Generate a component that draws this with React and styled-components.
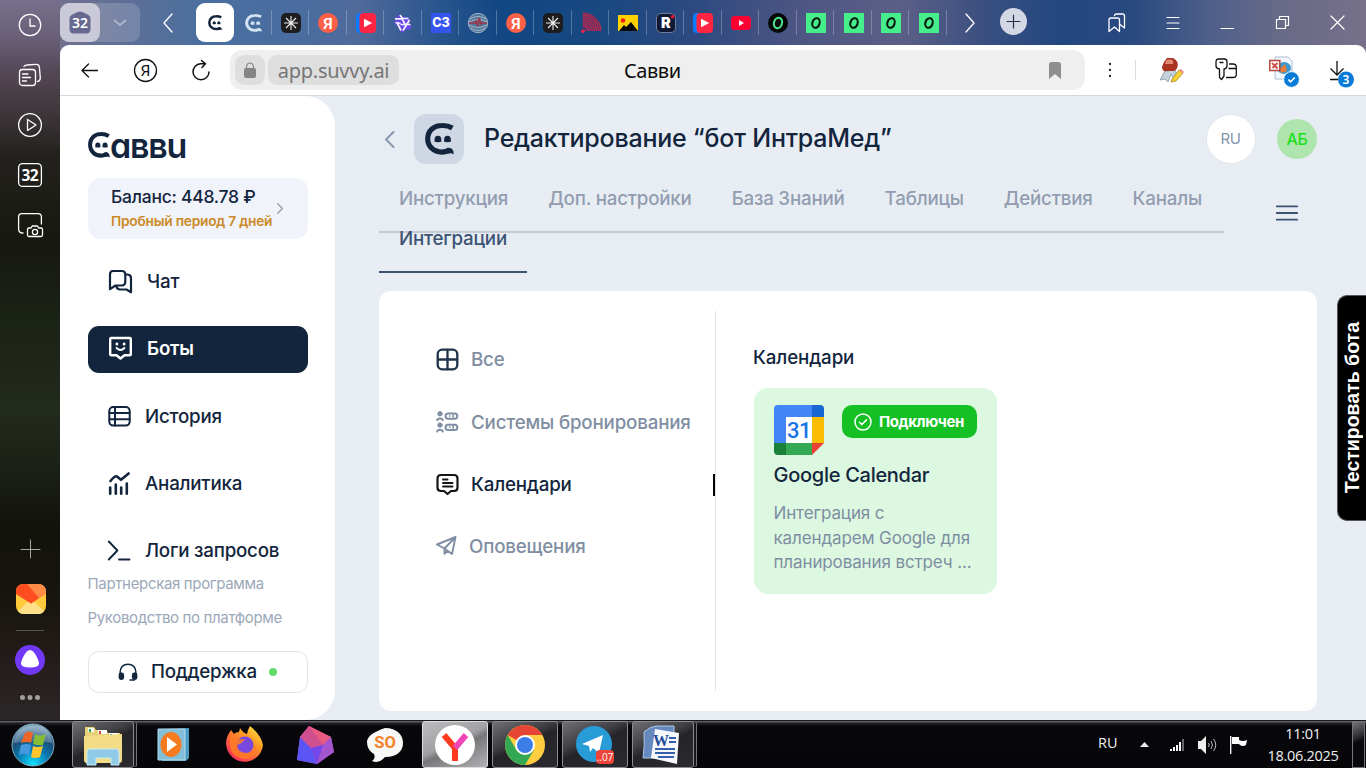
import React from "react";
import styled, { createGlobalStyle, css } from "styled-components";

const ink = "#12253d";
const muted = "#8997ab";

const GlobalStyle = createGlobalStyle`
  * { box-sizing: border-box; }
  body { margin: 0; overflow: hidden; font-family: Inter, "Liberation Sans", sans-serif; }
  svg { display: block; flex: none; overflow: visible; }
`;

/* ---------- shell ---------- */
const Desktop = styled.div`
  width: 1366px; height: 768px; display: flex; flex-direction: column; overflow: hidden; background: #08080b;
`;
const Browser = styled.div`
  height: 720px; display: flex; background: #6f6a80;
`;
const Rail = styled.aside`
  width: 60px; display: flex; flex-direction: column; align-items: center; padding-top: 10px;
  background: linear-gradient(180deg, #77708c 0, #6a6079 35px, #524653 75px, #40383c 110px, #23211d 155px, #171810 240px, #1a2115 310px, #232b1d 410px, #1a2015 470px, #12120c 530px, #17150e 600px, #241c1a 660px, #2b2628 720px);
`;
const RailButton = styled.div`
  width: 30px; height: 30px; margin-bottom: 20px; display: grid; place-items: center;
`;
const RailBottom = styled.div`
  margin-top: auto; display: flex; flex-direction: column; align-items: center; padding-bottom: 17px;
`;
const MailCell = styled.div`
  width: 31px; height: 30px; margin-top: 25px; padding-left: 1px;
`;
const RailLine = styled.div`
  width: 28px; height: 1px; background: #55524e; margin: 16px 0 14px;
`;
const Main = styled.div`
  width: 1306px; display: flex; flex-direction: column;
  background: linear-gradient(90deg, #71708f 0, #5c6f98 70px, #496f9f 150px, #4a6c9f 240px, #50699a 300px, #28558d 380px, #124783 440px, #184880 540px, #2f4a80 640px, #4d5683 740px, #5b5f86 840px, #3c5081 920px, #22477f 1000px, #29497f 1070px, #4e5f8a 1150px, #686a87 1220px, #77708a 1306px);
`;

/* ---------- tab strip ---------- */
const TabStrip = styled.div`
  height: 45px; display: flex; align-items: flex-start; padding-top: 3px;
  & > * { flex: none; }
`;
const TabGroup = styled.div`
  width: 80px; height: 39px; border-radius: 9px; background: rgba(255,255,255,.16); display: flex;
`;
const GroupCount = styled.div`
  width: 40px; height: 39px; border-radius: 9px; background: #c9c9d8; display: grid; place-items: center;
`;
const StripCell = styled.div`
  width: ${(p) => p.$w}px; height: 39px; display: grid; place-items: center;
`;
const ActiveTab = styled.div`
  width: 38px; height: 39px; border-radius: 9px; background: #fff; display: grid; place-items: center;
`;
const Tab = styled.div`
  width: 37.53px; height: 25px; margin-top: 7px; display: grid; place-items: center; padding-left: 2px;
  border-right: 1px solid rgba(255,255,255,.25);
`;
const NewTab = styled.div`
  width: 27px; height: 27px; border-radius: 50%; background: #d4d8e4; display: grid; place-items: center; margin: 5px 76px 0 7px;
`;

/* ---------- toolbar ---------- */
const Toolbar = styled.div`
  height: 51px; background: #fff; border-radius: 9px 9px 0 0; border-bottom: 1px solid #d3d7de;
  display: flex; align-items: center;
`;
const ToolCell = styled.div`
  width: ${(p) => p.$w}px; height: 50px; display: grid; place-items: center;
`;
const Address = styled.div`
  width: 855px; height: 40px; border-radius: 12px; background: #efefef; display: flex; align-items: center; padding: 0 24px 0 5px;
  font-family: "Noto Sans", "Open Sans", sans-serif; font-size: 20px;
`;
const LockBox = styled.div`
  width: 30px; height: 30px; border-radius: 9px; background: #dedede; display: grid; place-items: center; margin-right: 3px;
`;
const Host = styled.div`
  width: 131px; height: 30px; border-radius: 9px; background: #dedede; color: #767676; line-height: 31px; text-align: center; letter-spacing: -.25px;
`;
const PageTitle = styled.div`
  flex: 1; padding-left: 225px; color: #0c0c0c; letter-spacing: -.45px;
`;
const ToolDivider = styled.div`
  width: 1px; height: 20px; background: #dcdcdc;
`;

/* ---------- page ---------- */
const Page = styled.div`
  height: 624px; display: flex; background: #e8edf4; position: relative;
`;
const Sidebar = styled.aside`
  width: 275px; background: #fff; border-radius: 0 30px 30px 0; padding: 36px 27px 27px 28px; display: flex; flex-direction: column;
`;
const Logo = styled.div`
  height: 27px; display: flex; align-items: flex-start; color: ${ink}; margin-bottom: 19px;
`;
const LogoText = styled.span`
  font-size: 34px; line-height: 27px; font-weight: 600; letter-spacing: -1.2px; font-feature-settings: "cv11";
`;
const Balance = styled.div`
  height: 61px; border-radius: 13px; background: #f0f3fa; display: flex; align-items: center; padding-left: 23px; margin-bottom: 20px;
`;
const BalanceText = styled.div`
  width: 166px; white-space: nowrap;
`;
const Amount = styled.div`
  font-size: 17.5px; line-height: 25px; font-weight: 500; color: ${ink}; letter-spacing: -.26px;
`;
const Trial = styled.div`
  font-size: 13.75px; line-height: 24px; font-weight: 600; color: #cb8a26; letter-spacing: -.24px;
`;
const SideNav = styled.nav`
  display: flex; flex-direction: column; gap: 20.25px; height: 317px; margin-bottom: -8px;
`;
const SideItem = styled.div`
  height: 47px; flex: none; border-radius: 11px; display: flex; align-items: center; padding: 0 0 1.5px 20px;
  gap: 14px; font-size: 18.75px; letter-spacing: -.22px; font-weight: 500; color: ${ink}; white-space: nowrap;
  ${(p) => p.$active && css`background: #12253d; color: #fff; font-weight: 600;`}
`;
const SideLink = styled.div`
  font-size: 15px; line-height: 34px; color: #9ca8b9; white-space: nowrap; letter-spacing: -.34px; margin-left: -.5px;
`;
const Support = styled.div`
  height: 42px; border: 1px solid #dfe4ec; border-radius: 11px; display: flex; align-items: center; padding-left: 29px; margin-top: 16px;
  font-size: 18.75px; letter-spacing: -.25px; line-height: 38px; font-weight: 500; color: ${ink};
`;
const SupportLabel = styled.span`
  width: 105px; margin: 0 13px 0 13px; padding-bottom: 1px; white-space: nowrap;
`;
const Dot = styled.i`
  width: 8px; height: 8px; border-radius: 50%; background: #62dc6b;
`;

const Content = styled.main`
  width: 1031px; padding: 18px 49px 0 44px;
`;
const Header = styled.header`
  height: 50px; display: flex; align-items: center; padding-left: 5px;
`;
const Avatar = styled.div`
  width: 50px; height: 50px; border-radius: 12px; background: #cfd7e4; display: grid; place-items: center; margin: 0 20px 0 19px;
`;
const Title = styled.h1`
  margin: 0; padding-bottom: 1.5px; font-size: 25px; line-height: 48px; font-weight: 500; color: ${ink}; flex: 1; white-space: nowrap; letter-spacing: -.24px;
`;
const Lang = styled.div`
  width: 50px; height: 50px; border-radius: 50%; border: 1px solid #e2e7ec; background: #fff; color: #8495aa; font-size: 15px; letter-spacing: -.4px; line-height: 48px; text-align: center; margin-right: 21.5px;
`;
const User = styled.div`
  width: 40px; height: 40px; border-radius: 50%; background: #aee5ae; color: #1de01d; font-size: 16px; letter-spacing: -.3px; font-weight: 500; line-height: 40px; text-align: center;
`;
const NavRow = styled.div`
  display: flex; align-items: flex-start; margin-top: 14px; height: 113px;
`;
const Tabs = styled.nav`
  width: 845px; height: 55px; border-bottom: 2px solid #c5cbd8; display: flex; flex-wrap: wrap; align-content: flex-start;
`;
const PageTab = styled.div`
  height: ${(p) => (p.$active ? 55 : 40)}px; padding: 0 20px; line-height: 41px; font-size: 18.75px; letter-spacing: -.22px; font-weight: 500; white-space: nowrap;
  color: ${(p) => (p.$active ? "#3c5373" : "#929db0")};
  ${(p) => p.$active && css`border-bottom: 2px solid #3c5373;`}
`;
const Burger = styled.div`
  margin: 27px 0 0 52px;
`;
const Panel = styled.section`
  width: 938px; height: 420px; border-radius: 12px; background: #fff; display: flex; padding: 20px 0 0;
`;
const Filters = styled.div`
  width: 337px; height: 380px; border-right: 1px solid #e2e4e8; padding: 17.5px 0 0 57px; display: flex; flex-direction: column;
`;
const Filter = styled.div`
  height: ${(p) => p.$h || 62}px; display: flex; align-items: center; gap: 12px; color: #7f8ea2; font-size: 18.75px; letter-spacing: -.19px; font-weight: 500; white-space: nowrap;
  ${(p) => p.$active && css`color: ${ink};`}
`;
const Marker = styled.i`
  width: 2px; height: 22px; background: #000; margin-left: auto;
`;
const Results = styled.div`
  padding: 36px 0 0 38px;
`;
const SectionTitle = styled.h2`
  margin: 0 0 20px -1px; font-size: 18.75px; letter-spacing: -.12px; line-height: 21px; font-weight: 500; color: ${ink};
`;
const Card = styled.article`
  width: 243px; height: 206px; border-radius: 14px; background: #ddf8e0; padding: 17px 20px;
`;
const CardTop = styled.div`
  display: flex; justify-content: space-between; align-items: flex-start;
`;
const Connected = styled.div`
  width: 135px; height: 33px; border-radius: 10px; background: #14c024; color: #fff; display: flex; align-items: center; padding-left: 12px; gap: 7px;
  font-size: 15px; font-weight: 700; white-space: nowrap; letter-spacing: -.42px;
`;
const CardTitle = styled.h3`
  margin: 7px 0 13px -.5px; font-size: 20px; line-height: 26px; font-weight: 500; color: ${ink}; letter-spacing: -.28px;
`;
const CardText = styled.p`
  margin: 0 0 0 -.5px; font-size: 17px; line-height: 24.5px; color: #7d8da2; white-space: nowrap; letter-spacing: -.12px;
`;
const TestBot = styled.div`
  position: absolute; right: 0; top: 199px; width: 29px; height: 226px; border-radius: 10px 0 0 10px; background: #000; color: #fff;
  border: 1px solid #55555c; border-right: 0; writing-mode: vertical-rl; display: flex; align-items: center; justify-content: center;
  font: bold 19.5px "Liberation Sans", Arial, sans-serif; white-space: nowrap;
`;
const Turned = styled.span`
  transform: rotate(180deg); line-height: 26px;
`;

/* ---------- taskbar ---------- */
const Taskbar = styled.footer`
  height: 48px; border-top: 1px solid #17171b; display: flex; align-items: flex-start;
  background: linear-gradient(180deg, #79757d 0, #25242a 2px, #08080c 5px, #060609 46px);
`;
const StartCell = styled.div`
  width: 66px; height: 47px; display: grid; place-items: center; margin-right: 6px;
`;
const Task = styled.div`
  width: ${(p) => p.$w || 66}px; height: 47px; display: grid; place-items: center; margin-right: 4px;
  ${(p) => p.$open && css`
    border: 1px solid #8c8c90; border-radius: 3px;
    background: linear-gradient(155deg, #707074 0, #3e3d41 38%, #252428 50%, #2b2a2e 100%);
  `}
  ${(p) => p.$front && css`
    border: 1px solid #dedee0; background: linear-gradient(155deg, #bcbcbe 0, #a1a1a3 45%, #77777a 55%, #b2b2b4 100%);
  `}
  ${(p) => p.$stack && css`
    box-shadow: 3px 0 0 -1px #17171b, 4px 0 0 -1px #77777b; margin-right: 8px;
  `}
`;
const Tray = styled.div`
  margin-left: auto; display: flex; align-items: center; height: 47px; color: #f0f0f0; font-family: "Open Sans", "Noto Sans", sans-serif; font-size: 14.5px;
`;
const TrayLang = styled.div`
  width: 42px; padding-bottom: 4px;
`;
const TrayGap = styled.div`
  width: 21px;
`;
const TrayIcons = styled.div`
  display: flex; align-items: center; width: 96px; gap: 14px;
`;
const Clock = styled.div`
  width: 74px; text-align: center; line-height: 22px; padding-top: 1px; letter-spacing: -.3px; margin-right: 12px;
`;
const ShowDesktop = styled.div`
  width: 13px; height: 47px; border: 1px solid #74747a; background: linear-gradient(155deg, #77777b, #2a2a2e 35%, #09090c 45%); margin-right: 1px;
`;

/* ---------- drawings ---------- */
const Svg = ({ w, h = w, box, children, ...rest }) => (
  <svg width={w} height={h} viewBox={box || `0 0 ${w} ${h}`} fill="none" {...rest}>{children}</svg>
);
const Line = ({ children, color = "#fff", sw = 1.3, ...rest }) => (
  <Svg stroke={color} strokeWidth={sw} strokeLinecap="round" strokeLinejoin="round" {...rest}>{children}</Svg>
);

const Mark = ({ w = 29, h = 32, color = ink }) => (
  <Svg w={w} h={h} box="0 0 28 31" preserveAspectRatio="none">
    <path d="M26.4 4.8C23.4 3 20.5 2.3 16.3 2.4C8.5 2.4 2.6 7.8 2.6 15.2C2.6 22.5 8.3 28.2 16.2 28.2C19.6 28.2 21.5 26.8 24.4 26.6" stroke={color} strokeWidth="5" />
    <path d="M21 24.2C25 23.6 28 25.4 27.6 30.4C25.2 28.6 22 29.4 19 29.9Z" fill={color} />
    <path d="M9.2 18.2V16.4A3.3 4 0 0 1 15.8 16.4V18.2Q12.5 19 9.2 18.2ZM18.4 18.2V16.4A3.3 4 0 0 1 25 16.4V18.2Q21.7 19 18.4 18.2Z" fill={color} />
  </Svg>
);

const YaIcon = () => (
  <Svg w={20}><circle cx="10" cy="10" r="10" fill="#fc6047" />
    <text x="10" y="15.6" textAnchor="middle" fontSize="15.5" fontWeight="600" fontFamily="Roboto, sans-serif" fill="#fff">Я</text></Svg>
);
const Spark = () => (
  <Svg w={20}><rect width="20" height="20" rx="5" fill="#1d1d1f" />
    <path d="M10 3V17M3 10H17M5 5L15 15M15 5L5 15" stroke="#eee" strokeWidth="1.1" /></Svg>
);
const PlayTile = () => (
  <Svg w={20}><rect width="12" height="20" rx="4" fill="#0b7cff" /><rect x="3.5" width="16.5" height="20" rx="4" fill="#ff2441" /><path d="M8 5.8L16.2 10L8 14.2Z" fill="#fff" /></Svg>
);
const Knot = () => (
  <Svg w={20}>
    <path d="M6 1L9 4H15L17 7L15.5 10L19 14L16 17L13 16L10 20L7 18L5.5 13L1 11L3 7L1 5L5 4Z" fill="#6a4bea" />
    <path d="M7 2L9.5 5.5H15.5M2 5.8H9L12.5 12M4 9.5L8 17.5M16.5 7L10 17.5M7.5 11.5H17.5M2.5 9.5L7.5 10.5" stroke="#f5f0ff" strokeWidth="1.7" />
  </Svg>
);
const Se = () => (
  <Svg w={20}><rect width="20" height="20" fill="#3355ee" /><text x="10" y="14.3" textAnchor="middle" fontSize="12.5" fontWeight="800" fontFamily="Inter, sans-serif" fill="#fff">СЗ</text></Svg>
);
const Globe = () => (
  <Svg w={20}><circle cx="10" cy="10" r="9.7" fill="#51779d" stroke="#a3b3c5" /><path d="M2 6Q10 1 18 6M1 9Q10 4 19 9M1 12Q10 17 19 12M3 15Q10 20 17 15" stroke="#a4b6c8" /><path d="M1 10H7L8 8L10 13L11 5L13 11L14 10H19" stroke="#9e3548" strokeWidth="1.7" /></Svg>
);
const Fan = () => (
  <Svg w={20}><path d="M1.5 0A18.5 18.5 0 0 1 20 18H4Q4 15.5 1.5 15.5Z" fill="#a81f4c" opacity=".55" /><g stroke="#d32a48" strokeWidth=".9">{[5, 7.2, 9.4, 11.6, 13.8, 16, 18].map((r) => <path key={r} d={`M2 ${18 - r}A${r} ${r} 0 0 1 ${2 + r} 18`} />)}</g><circle cx="2" cy="18.2" r="1.8" fill="#ff2441" /></Svg>
);
const Photo = () => (
  <Svg w={20} h={16}><rect width="20" height="16" fill="#ffd100" /><path d="M1 16L6 10L8 12L13 7L20 16Z" fill="#090909" /><circle cx="5" cy="5.5" r="2.2" fill="#f01a1a" /></Svg>
);
const RuTile = () => (
  <Svg w={20}><rect x=".5" y=".5" width="19" height="19" rx="4.5" fill="#101a36" stroke="#6f7c9a" /><text x="9.8" y="15.2" textAnchor="middle" fontSize="14.5" fontWeight="900" fontFamily="Inter, sans-serif" fill="#fff">R</text><circle cx="16.6" cy="3.8" r="1.8" fill="#ed143b" /></Svg>
);
const Tube = () => (
  <Svg w={20} h={14}><rect width="20" height="14" rx="4" fill="#ff0033" /><path d="M8 4L13 7L8 10Z" fill="#fff" /></Svg>
);
const Ring = ({ round }) => (
  <Svg w={20}>
    {round ? <circle cx="10" cy="10" r="10" fill="#050807" /> : <rect width="20" height="20" fill="#45ee8b" />}
    <ellipse cx="10" cy="10" rx={round ? 4 : 3.6} ry={round ? 5.3 : 4.9} stroke={round ? "#4ee68c" : "#08180e"} strokeWidth="2.1" transform="rotate(18 10 10)" />
  </Svg>
);
const favicons = [Spark, YaIcon, PlayTile, Knot, Se, Globe, YaIcon, Spark, Fan, Photo, RuTile, PlayTile, Tube, () => <Ring round />, Ring, Ring, Ring, Ring];

const ChatIcon = () => (
  <Line w={25} color={ink} sw={2.2}>
    <path d="M5 2H14Q17.3 2 17.3 5.5V12.5Q17.3 16.5 13.5 16.5H7.5L2 20.2V5.5Q2 2 5 2ZM17.5 5.5H19.5Q23 5.8 23 9V23.3L18.5 20.5H12Q9 20.5 8.3 17" />
  </Line>
);
const BotIcon = () => (
  <Line w={25} color="#fff" sw={2.4}>
    <path d="M3.2 2H21.8Q22.8 2 22.8 3V18.2Q22.8 19.2 21.8 19.2H16.5L12.5 22.5L8.5 19.2H3.2Q2.2 19.2 2.2 18.2V3Q2.2 2 3.2 2Z" />
    <path d="M8.6 12Q12.5 16 16.4 12" strokeWidth="2" /><path d="M8.9 8V8.2M16.1 8V8.2" strokeWidth="2.8" />
  </Line>
);
const HistoryIcon = () => (
  <Line w={23} color={ink} sw={2}><rect x="1.3" y="2" width="20.4" height="18.6" rx="4" /><path d="M7 2V20.5M1.5 8H21.5M1.5 14.2H21.5" /></Line>
);
const StatsIcon = () => (
  <Line w={23} h={25} color={ink} sw={2.6}><path d="M2.5 10Q7 4.5 9 5.5L13 8.8L20.6 2.5M2.2 16.5V22.8M7.8 13.5V22.8M13.2 16.5V22.8M18.8 12.5V22.8" /></Line>
);
const LogIcon = () => (
  <Line w={23} color={ink} sw={1.9}><path d="M.8 2.5L9.4 11.5L.8 20.5M11 20.5H21.5" /></Line>
);
const HeadphonesIcon = () => (
  <Svg w={20} h={18}><path d="M2.2 13V8.5Q3 1.2 10 1.2T17.8 8.5V13" stroke={ink} strokeWidth="1.5" /><rect x=".6" y="9.5" width="5.5" height="7.5" rx="2.4" fill={ink} /><rect x="13.9" y="9.5" width="5.5" height="7.5" rx="2.4" fill={ink} /><path d="M11.5 17H17" stroke={ink} strokeWidth="1.5" /></Svg>
);
const GridIcon = () => (
  <Line w={23} color="#203349" sw={2.3}><rect x="1.7" y="1.7" width="19.6" height="19.6" rx="4.5" /><path d="M11.5 2V21M2 11.5H21" /></Line>
);
const BookingIcon = () => (
  <Line w={23} color="#7f8ea2" sw={2}>
    {[0, 11.3].map((y) => <g key={y} transform={`translate(0 ${y})`}><circle cx="4" cy="2.8" r="2.2" fill="#7f8ea2" strokeWidth="1" /><path d="M1.2 9.2Q1.5 7.4 4 7.4T6.8 9.2" /><rect x="9.5" y="2.5" width="11.8" height="5.2" rx="2.6" /><path d="M13.5 5H14M17.2 4V6" strokeWidth="1.6" /></g>)}
  </Line>
);
const NoteIcon = () => (
  <Line w={23} color="#151515" sw={2.2}><path d="M5 2H18Q21.5 2 21.5 5.5V14.5Q21.5 18 18 18H15L11.5 21L8 18H5Q1.5 18 1.5 14.5V5.5Q1.5 2 5 2Z" /><path d="M7 6.5H11.5M7 10H16.5M7 13.5H16.5" strokeWidth="2" /></Line>
);
const PlaneIcon = () => (
  <Line w={21} h={22} color="#7f8ea2" sw={1.9}><path d="M1 9.5L19.5 2L16 19L8.5 13.5L19.5 2M1 9.5L8.5 13.5V18.7L11.7 15.8" /></Line>
);
const GCal = () => (
  <Svg w={50}>
    <path d="M4 0H38V12H12V38H0V4Q0 0 4 0Z" fill="#4285f4" /><path d="M38 0H46Q50 0 50 4V12H38Z" fill="#1967d2" /><path d="M38 12H50V38H38Z" fill="#fbbc04" />
    <path d="M12 38H38V50H12Z" fill="#34a853" /><path d="M0 38H12V50H4Q0 50 0 46Z" fill="#188038" /><path d="M38 38H50L38 50Z" fill="#ea4335" /><path d="M12 12H38V38H12Z" fill="#fff" />
    <text x="25" y="33" textAnchor="middle" fontFamily="Roboto, sans-serif" fontSize="22" fontWeight="500" letterSpacing="-.6" fill="#1a73e8">31</text>
  </Svg>
);

const tabs = ["Инструкция", "Доп. настройки", "База Знаний", "Таблицы", "Действия", "Каналы"];
const sideItems = [
  { label: "Чат", Icon: ChatIcon },
  { label: "Боты", Icon: BotIcon, active: true },
  { label: "История", Icon: HistoryIcon },
  { label: "Аналитика", Icon: StatsIcon },
  { label: "Логи запросов", Icon: LogIcon },
];

function LeftRail() {
  return (
    <Rail>
      <RailButton><Line w={24}><circle cx="12" cy="12" r="10.7" /><path d="M12 6V13H17" /></Line></RailButton>
      <RailButton><Line w={24}><rect x="1.5" y="6.5" width="16" height="16" rx="3" /><path d="M6 3.5Q7 2 9 2L18 1.3Q21 1.2 21.4 4L22.3 15Q22.3 18 19.5 18.5M4.5 11H10M4.5 14.5H12.5M4.5 18H8.5" /></Line></RailButton>
      <RailButton><Line w={24}><circle cx="12" cy="12" r="11.4" /><path d="M9.5 6.5L18 12L9.5 17.5Z" /></Line></RailButton>
      <RailButton><Line w={24}><rect x=".6" y=".6" width="22.8" height="22.8" rx="4" /><text x="12" y="17.8" textAnchor="middle" fontSize="15.5" fontWeight="700" fontFamily="Noto Sans, sans-serif" fill="#fff" stroke="none" textLength="17">32</text></Line></RailButton>
      <RailButton><Line w={24}><path d="M5 20H4Q.6 19.5.6 16V4Q.6.6 4 .6H20Q23.4.6 23.4 4V11M9.5 16.5Q9.5 15 11 15H13L14.2 13H19.5L20.6 15H23Q24.5 15 24.5 16.5V22Q24.5 23.5 23 23.5H11Q9.5 23.5 9.5 22Z" /><circle cx="17" cy="19" r="2.6" /></Line></RailButton>
      <RailBottom>
        <Line w={20} color="#a5a49d" sw={1}><path d="M10.5 1V19M1 10.5H20" /></Line>
        <MailCell>
          <Svg w={30}>
            <rect width="30" height="30" rx="8" fill="#ffcb3d" /><path d="M2 27L15 15L28 27Q26 30 22 30H8Q4 30 2 27Z" fill="#ffe089" />
            <path d="M0 10V8Q0 0 8 0H22Q30 0 30 8V10L15 19.5Z" fill="#ff8b45" /><path d="M0 10V8Q0 0 8 0H11L23 14L15 19.5Z" fill="#ff4d20" />
          </Svg>
        </MailCell>
        <RailLine />
        <Svg w={30}><circle cx="15" cy="15" r="15" fill="#7139f6" /><path d="M15 5C19 5 24 15 24 18.5Q24 22.5 15 22.5T6 18.5C6 15 11 5 15 5Z" fill="#fff" /></Svg>
        <Svg w={20} h={28}><path d="M2.5 22.5h.01M10 22.5h.01M17.5 22.5h.01" stroke="#a39f9e" strokeWidth="5" strokeLinecap="round" /></Svg>
      </RailBottom>
    </Rail>
  );
}

function Strip() {
  return (
    <TabStrip>
      <TabGroup>
        <GroupCount>
          <Svg w={22} h={24}><path d="M8.5 1Q11 0 13.5 1L19.5 4Q21.5 5 21.5 8V18Q21.5 22.5 17 22.5H5Q.5 22.5.5 18V8Q.5 5 2.5 4Z" fill="#66688f" /><text x="11" y="16.5" textAnchor="middle" fontSize="14" fontWeight="600" fontFamily="Noto Sans, sans-serif" fill="#fff" textLength="16">32</text></Svg>
        </GroupCount>
        <StripCell $w={40}><Line w={14} h={8} sw={1.8} color="#b0b6cb"><path d="M1.5 1.5L7 6L12.5 1.5" /></Line></StripCell>
      </TabGroup>
      <StripCell $w={56}><Line w={10} h={18}><path d="M9 0L1 9L9 18" /></Line></StripCell>
      <ActiveTab><Mark w={14} h={15.5} /></ActiveTab>
      <Tab><Mark w={17} h={18} color="#d5e4f2" /></Tab>
      {favicons.map((Icon, i) => <Tab key={i}><Icon /></Tab>)}
      <StripCell $w={46}><Line w={10} h={18}><path d="M1 0L9 9L1 18" /></Line></StripCell>
      <NewTab><Line w={13} sw={1.2} color="#273049"><path d="M6.5 0V13M0 6.5H13" /></Line></NewTab>
      <StripCell $w={29}><Line w={18} h={20}><path d="M1 7Q1 5 3 5H9.5Q11.5 5 11.5 7V18.5L6.5 14L1 18.5ZM6.5 2.5Q6.8 1 8.5 1H14.5Q16.5 1 16.5 3V15L12 11.5" /></Line></StripCell>
      <StripCell $w={82}><Line w={12} h={12} sw={1.2}><path d="M0 .5H12M0 6H12M0 11.5H12" /></Line></StripCell>
      <StripCell $w={28}><Line w={13} h={16} sw={1.2}><path d="M0 13.5H12.5" /></Line></StripCell>
      <StripCell $w={82}><Line w={13} sw={1.2}><path d="M.5 3.5H9.5V12.5H.5ZM3.5 3.5V.5H12.5V9.5H9.5" /></Line></StripCell>
      <StripCell $w={28}><Line w={13} sw={1.2}><path d="M0 0L13 13M13 0L0 13" /></Line></StripCell>
    </TabStrip>
  );
}

function Tools() {
  return (
    <Toolbar>
      <ToolCell $w={58}><Line w={17} h={15} color="#111"><path d="M16.5 7.5H1M7.5 1L1 7.5L7.5 14" /></Line></ToolCell>
      <ToolCell $w={55}><Line w={23} color="#111" sw={1.3}><circle cx="11.5" cy="11.5" r="11" /><text x="11.5" y="17" textAnchor="middle" fontSize="15.5" fontFamily="Roboto, sans-serif" fill="#111" stroke="none">Я</text></Line></ToolCell>
      <ToolCell $w={55}><Line w={18} h={21} color="#111" sw={1.5}><path d="M13.5 3.8H8.5A8 8 0 1 0 17 12M9.5.5L13.5 3.8L10 7.5" /></Line></ToolCell>
      <ToolCell $w={2} />
      <Address>
        <LockBox><Svg w={12} h={16}><rect y="6" width="12" height="10" rx="2" fill="#858585" /><path d="M2.5 7V4.5Q3 1 6 1T9.5 4.5V7" stroke="#858585" strokeWidth="1.2" /></Svg></LockBox>
        <Host>app.suvvy.ai</Host>
        <PageTitle>Савви</PageTitle>
        <Svg w={12} h={17}><path d="M2.5 0H9.5Q12 0 12 2.5V17L6 12L0 17V2.5Q0 0 2.5 0Z" fill="#8f8f8f" /></Svg>
      </Address>
      <ToolCell $w={50}><Svg w={4} h={16}><path d="M2 2h.01M2 8h.01M2 14h.01" stroke="#222" strokeWidth="2.3" strokeLinecap="round" /></Svg></ToolCell>
      <ToolDivider />
      <ToolCell $w={70}><Svg w={24} h={26}><path d="M6 14L1 23L6 22L9 25L12 17L16 24L19 20L16 13Z" fill="#c4d2de" stroke="#778b9b" strokeWidth=".7" /><path d="M8 1H14Q20 4 18.5 10Q17 14 14 14H8Q3 15 3 10Q4 5 8 1Z" fill="#a93321" /><path d="M8 2.5H13Q15 5 14 7H6Q6 5 8 2.5Z" fill="#e08a74" /><path d="M13 22L20 13L24 16L17 24L12 25Z" fill="#f4d32f" stroke="#9d7620" strokeWidth=".7" /><path d="M20 13L22 12L25 15L23.5 17Z" fill="#ee8f83" /></Svg></ToolCell>
      <ToolCell $w={40}><Line w={22} color="#111" sw={1.3}><path d="M3.5 0H9.5Q12 0 12 3V7Q12 9.5 9 10V17L6.5 20.5L4.5 18.5V10Q1 9.5 1 7V3Q1 0 3.5 0ZM5 3.5H8M14.5 5H18Q21.3 5 21.3 8V15.5Q21.3 18.5 18 18.5H11.5M14 9.5H21" /></Line></ToolCell>
      <ToolCell $w={72}><Svg w={26} h={26}><path d="M6 0H19L23 4V22H6Z" fill="#f3f7fc" stroke="#a8bed7" /><ellipse cx="15" cy="11" rx="7" ry="6" fill="#3998cd" /><path d="M11 12L16 7L18 14L12 16Z" fill="#ee7d34" /><rect x=".8" y="3.5" width="10" height="10" fill="#fff" stroke="#b9443c" strokeWidth="1.5" /><path d="M3 6L8.5 11.5M8.5 6L3.5 11" stroke="#cf554b" strokeWidth="2" /><circle cx="22.5" cy="22.5" r="7.9" fill="#087bd9" stroke="#fff" /><path d="M19.3 22.5L21.6 24.8L25.8 20.5" stroke="#fff" strokeWidth="1.7" /></Svg></ToolCell>
      <ToolCell $w={42}><Svg w={23} h={26}><path d="M9 4V18M2.5 11.5L9 18L15.5 11.5M2 22.5H10" stroke="#111" strokeWidth="1.3" /><circle cx="18" cy="22.5" r="8" fill="#087bd9" /><text x="18" y="26.9" textAnchor="middle" fontSize="12" fontWeight="600" fontFamily="Noto Sans, sans-serif" fill="#fff">3</text></Svg></ToolCell>
    </Toolbar>
  );
}

function SavviPage() {
  return (
    <Page>
      <Sidebar>
        <Logo><Mark w={22} h={26} /><LogoText>аввu</LogoText></Logo>
        <Balance>
          <BalanceText><Amount>Баланс: 448.78 ₽</Amount><Trial>Пробный период 7 дней</Trial></BalanceText>
          <Line w={6} h={11} color="#98a4b5" sw={1.5}><path d="M.8.8L5.3 5.5L.8 10.2" /></Line>
        </Balance>
        <SideNav>
          {sideItems.map(({ label, Icon, active }) => <SideItem key={label} $active={active}><Icon />{label}</SideItem>)}
        </SideNav>
        <SideLink>Партнерская программа</SideLink>
        <SideLink>Руководство по платформе</SideLink>
        <Support><HeadphonesIcon /><SupportLabel>Поддержка</SupportLabel><Dot /></Support>
      </Sidebar>
      <Content>
        <Header>
          <Line w={11} h={17} color={muted} sw={2}><path d="M9.5 1L2 8.5L9.5 16" /></Line>
          <Avatar><Mark /></Avatar>
          <Title>Редактирование “бот ИнтраМед”</Title>
          <Lang>RU</Lang>
          <User>АБ</User>
        </Header>
        <NavRow>
          <Tabs>
            {tabs.map((t) => <PageTab key={t}>{t}</PageTab>)}
            <PageTab $active>Интеграции</PageTab>
          </Tabs>
          <Burger><Line w={22} h={16} color="#3c5373" sw={1.8}><path d="M.8 1.3H21.2M.8 8H21.2M.8 14.7H21.2" /></Line></Burger>
        </NavRow>
        <Panel>
          <Filters>
            <Filter><GridIcon />Все</Filter>
            <Filter $h={63}><BookingIcon />Системы бронирования</Filter>
            <Filter $active><NoteIcon />Календари<Marker /></Filter>
            <Filter $h={61}><PlaneIcon />Оповещения</Filter>
          </Filters>
          <Results>
            <SectionTitle>Календари</SectionTitle>
            <Card>
              <CardTop>
                <GCal />
                <Connected><Line w={18} sw={1.5}><circle cx="9" cy="9" r="8" /><path d="M5.5 9.2L8 11.6L12.5 6.8" /></Line>Подключен</Connected>
              </CardTop>
              <CardTitle>Google Calendar</CardTitle>
              <CardText>Интеграция с<br />календарем Google для<br />планирования встреч ...</CardText>
            </Card>
          </Results>
        </Panel>
      </Content>
      <TestBot><Turned>Тестировать бота</Turned></TestBot>
    </Page>
  );
}

function Bar() {
  return (
    <Taskbar>
      <StartCell>
        <Svg w={44}><defs><radialGradient id="orb" cx=".5" cy=".95" r=".9"><stop stopColor="#14dfff" /><stop offset=".4" stopColor="#087db5" /><stop offset=".7" stopColor="#1b4e78" /><stop offset="1" stopColor="#7fa5be" /></radialGradient></defs>
          <circle cx="22" cy="22" r="21" fill="url(#orb)" stroke="#81a9bd" /><path d="M3 20Q5 4 22 3T41 20Q22 16 3 20Z" fill="#fff" opacity=".22" />
          <path d="M14 10Q18 7 22 10L20 20Q16 18 10 20Z" fill="#ee6527" /><path d="M24 11Q29 14 35 11L32 22Q27 23 22 21Z" fill="#86bd37" /><path d="M10 22Q16 20 20 22L18 33Q14 29 8 32Z" fill="#4499df" /><path d="M22 23Q26 25 32 23L29 34Q24 36 20 34Z" fill="#ffc52c" />
        </Svg>
      </StartCell>
      <Task $w={62} $open $stack><Svg w={42}><path d="M3 3H12L14 6H24L26 9H38V38H3Z" fill="#e6d078" /><path d="M6 4h6v4H6zM16 6h9v4h-9zM27 9h9v4h-9z" fill="#fff" /><path d="M7 5h2v3H7z" fill="#28a34a" /><path d="M17 7h2v3h-2z" fill="#d4432f" /><path d="M28 10h2v3h-2z" fill="#328dd6" /><path d="M2 12L40 10V36Q40 39 37 39H5Q2 39 2 36Z" fill="#f2dc86" /><path d="M8 25H34Q37 25 37 28V41H29V34H14V41H5V28Q5 25 8 25Z" fill="#8fcbe6" stroke="#c9ecf7" /></Svg></Task>
      <Task><Svg w={37} h={36}><path d="M5 2L32 1V31L29 34H5Z" fill="#4c9cc1" /><path d="M1 2H28V33H1Z" fill="#83bfd9" stroke="#b0dcea" /><ellipse cx="14" cy="17.5" rx="10.5" ry="12.5" fill="#f47b20" /><path d="M10 10L20 17.5L10 25Z" fill="#fff" /></Svg></Task>
      <Task><Svg w={40}><defs><linearGradient id="fx" x1="1" y1="0" x2=".2" y2="1"><stop stopColor="#fff44d" /><stop offset=".4" stopColor="#ff9a22" /><stop offset="1" stopColor="#ff2460" /></linearGradient></defs><path d="M3 10L6 5L9 9Q11 7 14 7L15 3Q18 8 22 9Q23 4 25 1Q36 10 38 20A18.5 18.5 0 1 1 3 10Z" fill="url(#fx)" /><circle cx="20" cy="20" r="8.5" fill="#7949df" /><path d="M5 9Q9 16 20 14Q17 19 12 20Q13 28 22 28Q29 27 30 20Q33 33 20 34Q6 33 5 20Z" fill="#ff7d24" opacity=".85" /></Svg></Task>
      <Task><Svg w={40}><path d="M14 1L36 12L39 27L22 39L2 35L5 12Z" fill="#b74cb3" /><path d="M14 1L36 12L28 20L5 12Z" fill="#e85a80" /><path d="M36 12L39 27L22 39L28 20Z" fill="#a355cf" /><path d="M5 12L16 23L22 39L2 35Z" fill="#5a55f4" /><path d="M5 12L14 1L28 20L16 23Z" fill="#d0508f" /><path d="M16 23L28 20L22 39Z" fill="#7547e8" /></Svg></Task>
      <Task><Svg w={38} h={36}><path d="M19 1C31 1 37 8 37 16S31 30 19 30Q13 37 6 34Q10 31 8 27Q1 23 1 15T19 1Z" fill="#f8f8f6" /><text x="19" y="20.5" textAnchor="middle" fontFamily="Roboto, sans-serif" fontWeight="700" fontSize="16.5" fill="#f48127">SO</text></Svg></Task>
      <Task $open $front><Svg w={40}><circle cx="20" cy="20" r="20" fill="#fff" /><path d="M9 10L20 23V36" stroke="#ff3b1f" strokeWidth="6" strokeLinejoin="round" /><path d="M20 23L31 10" stroke="#ef45b5" strokeWidth="6" /></Svg></Task>
      <Task $open><Svg w={40}><circle cx="20" cy="20" r="20" fill="#ffcd40" /><path d="M20 20L2.7 10A20 20 0 0 1 37.3 10H20Z" fill="#e64535" /><path d="M2.7 10A20 20 0 0 0 20 40L29 25L20 20L11.5 25Z" fill="#35a853" /><circle cx="20" cy="20" r="10" fill="#fff" /><circle cx="20" cy="20" r="8" fill="#3b7de9" /></Svg></Task>
      <Task $open><Svg w={38}><circle cx="18" cy="18" r="18" fill="#289cd7" /><path d="M6 18L27 9L23 27L17 22L14 26L13 20Z" fill="#fff" /><rect x="20" y="24" width="18" height="14" rx="4" fill="#ef4339" /><text x="29" y="35" textAnchor="middle" fontFamily="Open Sans, sans-serif" fontSize="10" fill="#fff">..07</text></Svg></Task>
      <Task $w={62} $open $stack><Svg w={44} h={42}><path d="M3 8Q8 3 15 2H33V34H2Q4 20 3 8Z" fill="#6589bf" stroke="#adc7e6" /><path d="M14 5L38 9L36 40L10 34Z" fill="#f6f8fc" /><path d="M28 14H35M28 18H35M14 25H34M14 29H34M17 33H33" stroke="#355faa" strokeWidth="1.8" /><text x="20" y="22" textAnchor="middle" fontFamily="Liberation Serif, serif" fontWeight="700" fontSize="16" fill="#244d98">W</text></Svg></Task>
      <Tray>
        <TrayLang>RU</TrayLang>
        <Svg w={9} h={5}><path d="M0 5L4.5 0L9 5Z" fill="#eee" /></Svg>
        <TrayGap />
        <TrayIcons>
          <Svg w={14} h={12}><path d="M1 12V10M4 12V8M7 12V6M10 12V3" stroke="#fff" strokeWidth="2" /><path d="M13 12V0" stroke="#66666c" strokeWidth="2" /></Svg>
          <Svg w={18} h={18}><path d="M0 5H3L8 0V18L3 13H0Z" fill="#eee" /><path d="M10.5 7Q12 9 10.5 11M13 5Q16 9 13 13M15.5 3Q20 9 15.5 15" stroke="#bbb" /></Svg>
          <Svg w={18} h={18}><path d="M.7 0V18" stroke="#fff" strokeWidth="1.3" /><path d="M2 1H9V4Q13 6 17 4L16 9Q13 11 10 9L9 8H2Z" fill="#fff" /></Svg>
        </TrayIcons>
        <Clock>11:01<br />18.06.2025</Clock>
        <ShowDesktop />
      </Tray>
    </Taskbar>
  );
}

export default function App() {
  return (
    <Desktop>
      <GlobalStyle />
      <Browser>
        <LeftRail />
        <Main><Strip /><Tools /><SavviPage /></Main>
      </Browser>
      <Bar />
    </Desktop>
  );
}
